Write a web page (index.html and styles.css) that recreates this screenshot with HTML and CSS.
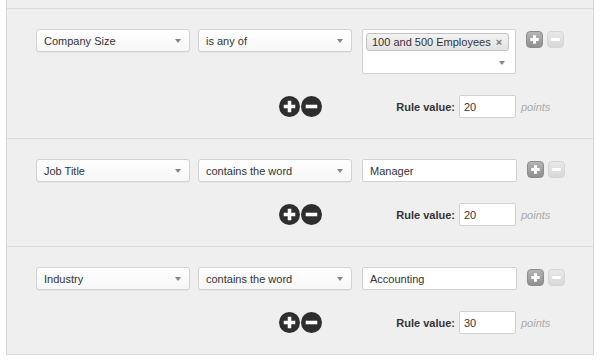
FILE: index.html
```html
<!DOCTYPE html>
<html lang="en">
<head>
  <meta charset="UTF-8">
  <title>Lead Scoring Rules</title>
  <link rel="stylesheet" href="styles.css">
</head>
<body>
  <div class="panel">

    <!-- Rule 1 -->
    <div class="rule">
      <div class="rule-row">
        <div class="select"><span>Company Size</span><i class="caret"></i></div>
        <div class="select op"><span>is any of</span><i class="caret"></i></div>
        <div class="multi">
          <span class="tag">100 and 500 Employees <b>&times;</b></span>
          <i class="caret"></i>
        </div>
        <div class="row-buttons">
          <span class="sq-btn add"><svg viewBox="0 0 16 16"><path d="M8 4v8M4 8h8"/></svg></span>
          <span class="sq-btn remove"><svg viewBox="0 0 16 16"><path d="M4 8h8"/></svg></span>
        </div>
      </div>
      <div class="rule-row value-row">
        <div class="group-buttons">
          <svg class="circle" viewBox="0 0 20 20"><circle cx="10" cy="10" r="10"/><path d="M10 4.5v11M4.5 10h11"/></svg>
          <svg class="circle" viewBox="0 0 20 20"><circle cx="10" cy="10" r="10"/><path d="M4.5 10h11"/></svg>
        </div>
        <div class="rule-value">
          <label>Rule value:</label>
          <input type="text" value="20">
        </div>
        <span class="points">points</span>
      </div>
    </div>

    <!-- Rule 2 -->
    <div class="rule">
      <div class="rule-row">
        <div class="select"><span>Job Title</span><i class="caret"></i></div>
        <div class="select op"><span>contains the word</span><i class="caret"></i></div>
        <input class="text-value" type="text" value="Manager">
        <div class="row-buttons">
          <span class="sq-btn add"><svg viewBox="0 0 16 16"><path d="M8 4v8M4 8h8"/></svg></span>
          <span class="sq-btn remove"><svg viewBox="0 0 16 16"><path d="M4 8h8"/></svg></span>
        </div>
      </div>
      <div class="rule-row value-row">
        <div class="group-buttons">
          <svg class="circle" viewBox="0 0 20 20"><circle cx="10" cy="10" r="10"/><path d="M10 4.5v11M4.5 10h11"/></svg>
          <svg class="circle" viewBox="0 0 20 20"><circle cx="10" cy="10" r="10"/><path d="M4.5 10h11"/></svg>
        </div>
        <div class="rule-value">
          <label>Rule value:</label>
          <input type="text" value="20">
        </div>
        <span class="points">points</span>
      </div>
    </div>

    <!-- Rule 3 -->
    <div class="rule">
      <div class="rule-row">
        <div class="select"><span>Industry</span><i class="caret"></i></div>
        <div class="select op"><span>contains the word</span><i class="caret"></i></div>
        <input class="text-value" type="text" value="Accounting">
        <div class="row-buttons">
          <span class="sq-btn add"><svg viewBox="0 0 16 16"><path d="M8 4v8M4 8h8"/></svg></span>
          <span class="sq-btn remove"><svg viewBox="0 0 16 16"><path d="M4 8h8"/></svg></span>
        </div>
      </div>
      <div class="rule-row value-row">
        <div class="group-buttons">
          <svg class="circle" viewBox="0 0 20 20"><circle cx="10" cy="10" r="10"/><path d="M10 4.5v11M4.5 10h11"/></svg>
          <svg class="circle" viewBox="0 0 20 20"><circle cx="10" cy="10" r="10"/><path d="M4.5 10h11"/></svg>
        </div>
        <div class="rule-value">
          <label>Rule value:</label>
          <input type="text" value="30">
        </div>
        <span class="points">points</span>
      </div>
    </div>

  </div>
</body>
</html>
```

FILE: styles.css
```css
/* General reset */
* {
  margin: 0;
  padding: 0;
  box-sizing: border-box;
}

body {
  font-family: "Liberation Sans", Arial, sans-serif;
  font-size: 11px;
  color: #333;
  background: #fff;
}

.panel {
  margin-left: 6px;
  width: 588px;
  padding-top: 8px;
  background: #efefef;
  border-left: 1px solid #d9d9d9;
  border-right: 1px solid #d9d9d9;
}

.rule {
  display: flex;
  flex-direction: column;
  gap: 21px;
  padding: 20px 0 20px 29px;
  border-top: 1px solid #d9d9d9;
}

.rule:last-child {
  border-bottom: 1px solid #d9d9d9;
}

.rule-row {
  display: flex;
  align-items: flex-start;
}

/* Dropdowns */
.select {
  position: relative;
  display: flex;
  align-items: center;
  width: 154px;
  height: 23px;
  padding: 0 20px 0 7px;
  background: linear-gradient(#ffffff, #f7f7f7);
  border: 1px solid #d2d2d2;
  border-radius: 3px;
  box-shadow: 0 1px 0 rgba(0, 0, 0, 0.04);
}

.select.op {
  margin-left: 8px;
}

.caret {
  position: absolute;
  right: 8px;
  top: 9px;
  width: 0;
  height: 0;
  border-left: 3.5px solid transparent;
  border-right: 3.5px solid transparent;
  border-top: 4px solid #858585;
}

.multi {
  position: relative;
  width: 154px;
  height: 45px;
  margin-left: 10px;
  padding: 3px;
  background: #fff;
  border: 1px solid #d2d2d2;
  border-radius: 2px;
}

.multi .caret {
  right: 10px;
  top: 31px;
}

.tag {
  display: inline-flex;
  align-items: center;
  height: 18px;
  padding: 0 6px 0 5px;
  background: linear-gradient(#f3f3f3, #e2e2e2);
  border: 1px solid #c3c3c3;
  border-radius: 3px;
}

.tag b {
  margin-left: 5px;
  font-size: 11px;
  color: #777;
}

.text-value {
  width: 155px;
  height: 23px;
  margin-left: 10px;
  padding: 0 7px;
  font: inherit;
  color: #333;
  background: #fff;
  border: 1px solid #d2d2d2;
  border-radius: 2px;
  outline: none;
}

/* Small add / remove buttons */
.row-buttons {
  display: flex;
  gap: 4px;
  margin-left: 10px;
  padding-top: 2px;
}

.sq-btn {
  display: flex;
  width: 17px;
  height: 17px;
  border-radius: 4px;
}

.sq-btn svg {
  width: 17px;
  height: 17px;
  margin: -1px;
  stroke: #fff;
  stroke-width: 2.8;
}

.sq-btn.add {
  background: linear-gradient(#b5b5b5, #8f8f8f);
  border: 1px solid #8c8c8c;
}

.sq-btn.remove {
  background: linear-gradient(#e8e8e8, #d8d8d8);
  border: 1px solid #d4d4d4;
}

/* Value row */
.value-row {
  align-items: center;
}

.group-buttons {
  display: flex;
  gap: 1px;
  justify-content: flex-end;
  width: 286px;
}

.circle {
  width: 21px;
  height: 21px;
}

.circle circle {
  fill: #2e2e2e;
}

.circle path {
  stroke: #fff;
  stroke-width: 3.4;
}

.rule-value {
  display: flex;
  align-items: center;
  justify-content: flex-end;
  width: 194px;
}

.rule-value label {
  font-weight: bold;
  color: #333;
  margin-right: 4px;
}

.rule-value input {
  width: 57px;
  height: 23px;
  padding: 0 4px;
  font: inherit;
  color: #333;
  background: #fff;
  border: 1px solid #d2d2d2;
  border-radius: 2px;
  outline: none;
}

.points {
  margin-left: 5px;
  font-style: italic;
  color: #aaa;
}
```
